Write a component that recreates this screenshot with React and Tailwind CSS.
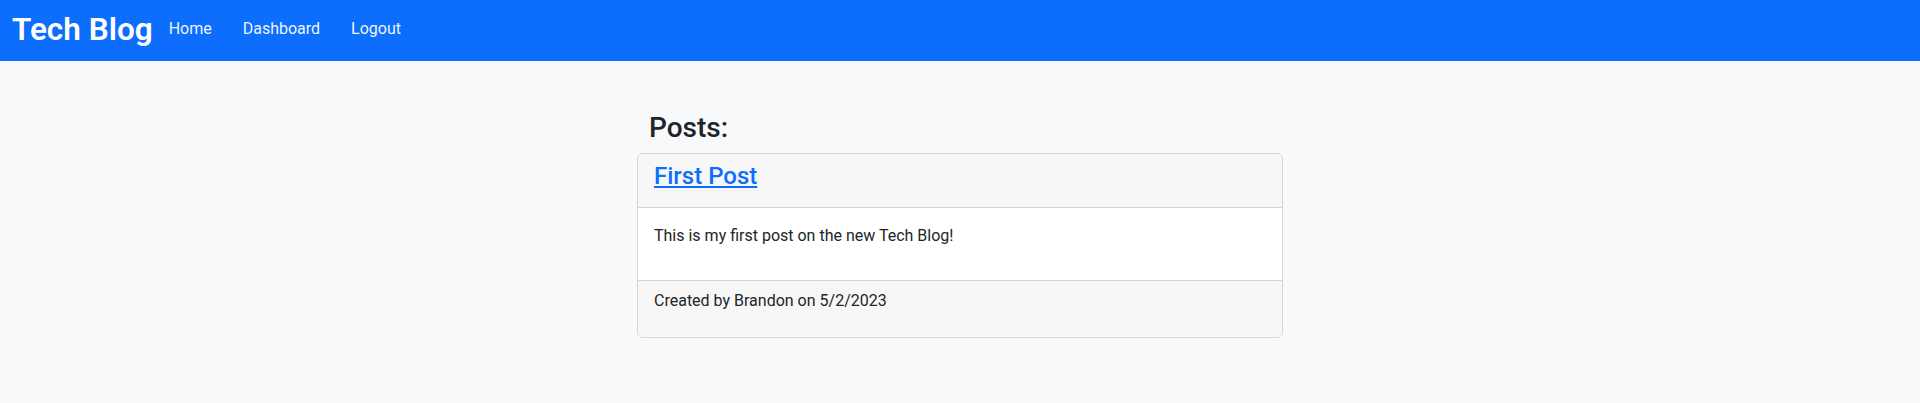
import React from 'react';

const posts = [
    {
        id: 1,
        title: 'First Post',
        content: 'This is my first post on the new Tech Blog!',
        author: 'Brandon',
        date: '5/2/2023',
    },
];

const Header = () => {
    return (
        <nav className="flex items-center h-[61px] bg-[#0d6efd] px-3">
            <a href="#" className="text-[31.5px] font-semibold text-white leading-none mr-4 -mt-[2px]">Tech Blog</a>
            <div className="flex items-center gap-[31px] text-base text-white/95 -mt-[4px]">
                <a href="#">Home</a>
                <a href="#">Dashboard</a>
                <a href="#">Logout</a>
            </div>
        </nav>
    );
};

const App = () => {
    return (
        <div className="min-h-[403px] bg-[#f8f9fa] text-[#212529] font-['Roboto','Noto_Sans',sans-serif]">
            <Header />
            <div className="flex justify-center pt-[50px]">
                <div className="w-[646px]">
                    <h3 className="text-[28px] font-medium leading-[1.2] mb-2 px-3">Posts:</h3>
                    {posts.map(post => (
                        <div key={post.id} className="bg-white border border-[#d5d5d5] rounded-md overflow-hidden">
                            <div className="bg-[#f7f7f7] border-b border-[#d5d5d5] px-4 pt-2 pb-4">
                                <a href="#" className="text-2xl leading-[1.2] font-medium text-[#0d6efd] underline">{post.title}</a>
                            </div>
                            <div className="p-4">
                                <p className="leading-6 mb-4">{post.content}</p>
                            </div>
                            <div className="bg-[#f7f7f7] border-t border-[#d5d5d5] px-4 py-2">
                                <p className="leading-6 mb-4">Created by {post.author} on {post.date}</p>
                            </div>
                        </div>
                    ))}
                </div>
            </div>
        </div>
    );
};

export default App;
